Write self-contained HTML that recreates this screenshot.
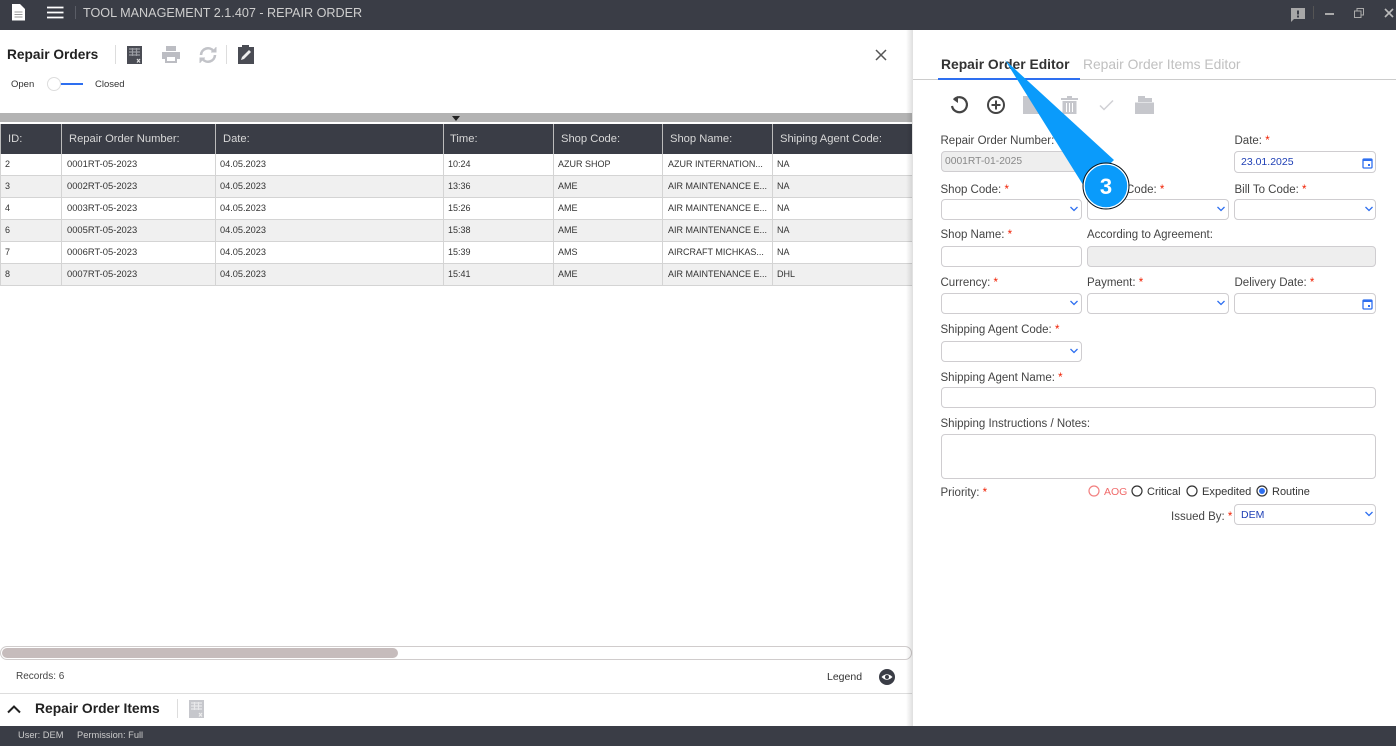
<!DOCTYPE html>
<html><head><meta charset="utf-8"><style>
html,body{margin:0;padding:0;width:1396px;height:746px;overflow:hidden;background:#fff}
body{font-family:"Liberation Sans",sans-serif;position:relative;color:#333}
div,span,svg{position:absolute;box-sizing:border-box}
.t{white-space:nowrap;line-height:14px}
.lb{font-size:11.5px;color:#444;white-space:nowrap;line-height:14px}
.lb b{color:#f01e00;font-weight:400;position:static}
.f{border:1px solid #cfcdd0;border-radius:4px;background:#fff;height:21px}
.hd{top:124px;height:30px;background:#3a3d46;color:#d8d8d8;font-size:11.2px;line-height:30px;padding-left:7px;border-left:1px solid #bbb;white-space:nowrap}
.r{left:0;width:912px;height:22px;border-bottom:1px solid #d4d4d4}
.c{font-size:9px;color:#333;line-height:21px;top:0;white-space:nowrap}
.n{font-size:9.400px;line-height:20px}
.d{font-size:9.200px}
.v{position:absolute;top:0;width:1px;height:22px;background:#d4d4d4}
</style></head><body>
<div style="left:0;top:0;width:1396px;height:30px;background:#3a3d46"></div>
<svg style="left:11px;top:4px" width="15" height="17" viewBox="0 0 15 17"><path d="M1 0H9L14 5V16.500H1Z" fill="#fff"/><path d="M3.500 8H11.500M3.500 10.500H11.500M3.500 13H11.500" stroke="#999" stroke-width="1"/></svg>
<svg style="left:47px;top:6px" width="17" height="13" viewBox="0 0 17 13"><path d="M0 1.500H16.500M0 6.500H16.500M0 11.500H16.500" stroke="#fff" stroke-width="1.700"/></svg>
<div style="left:75px;top:6px;width:1px;height:13px;background:#5a5d66"></div>
<div class="t" style="left:83px;top:6px;font-size:12.620px;color:#cfcfcf">TOOL MANAGEMENT 2.1.407 - REPAIR ORDER</div>
<svg style="left:1290px;top:8px" width="16" height="14" viewBox="0 0 16 14"><path d="M1 0H15V11H4L1 14Z" fill="#a8a8a8"/><rect x="7" y="2.500" width="2" height="4" fill="#3a3d46"/><rect x="7" y="7.500" width="2" height="2" fill="#3a3d46"/></svg>
<div style="left:1313px;top:6px;width:1px;height:13px;background:#555"></div>
<div style="left:1325px;top:13px;width:9px;height:2px;background:#aaa"></div>
<svg style="left:1354px;top:8px" width="10" height="10" viewBox="0 0 10 10" fill="none" stroke="#aaa"><rect x="0.500" y="3" width="6.500" height="6.500"/><path d="M3 3V0.500H9.500V7H7"/></svg>
<svg style="left:1384px;top:8px" width="10" height="10" viewBox="0 0 10 10"><path d="M1 1L9 9M9 1L1 9" stroke="#bbb" stroke-width="1.600"/></svg>

<div class="t" style="left:7px;top:48px;font-size:13.700px;font-weight:700;color:#222">Repair Orders</div>
<div style="left:115px;top:45px;width:1px;height:19px;background:#ddd"></div>
<svg style="left:127px;top:46px" width="15" height="18" viewBox="0 0 15 18"><rect width="15" height="18" fill="#4a4c54"/><path d="M2 3H13M2 6H13M2 9H13M5.500 2V10M9.500 2V10" stroke="#9a9ca2" stroke-width="1.200"/><path d="M10 13L13 16.500M13 13L10 16.500" stroke="#ddd" stroke-width="1.200"/></svg>
<svg style="left:162px;top:46px" width="18" height="17" viewBox="0 0 18 17"><path d="M4 0H14V5H4ZM0 6H18V13H15V17H3V13H0Z" fill="#bcbdc3"/><rect x="5" y="11" width="8" height="4" fill="#fff"/></svg>
<svg style="left:198px;top:45px" width="20" height="20" viewBox="0 0 20 20" fill="none" stroke="#c2c3c8" stroke-width="2.600"><path d="M3 10A7 7 0 0 1 15.500 6M17 10A7 7 0 0 1 4.500 14"/><path d="M13 7H18V2M7 13H2V18" stroke-width="1" fill="#c2c3c8"/></svg>
<div style="left:226px;top:45px;width:1px;height:19px;background:#ddd"></div>
<svg style="left:238px;top:45px" width="16" height="19" viewBox="0 0 16 19"><path d="M0 2H4V0H11V2H16V19H0Z" fill="#4a4c54"/><path d="M3 15L4 12L11 5L13 7L6 14Z" fill="#eee"/></svg>
<div class="t" style="left:11px;top:78px;font-size:9.500px">Open</div>
<div style="left:56px;top:83px;width:27px;height:2px;background:#2e6ff0"></div>
<div style="left:47px;top:77px;width:14px;height:14px;border-radius:50%;background:#fff;border:1px solid #ddd"></div>
<div class="t" style="left:95px;top:78px;font-size:9.500px">Closed</div>
<svg style="left:875px;top:49px" width="12" height="12" viewBox="0 0 12 12"><path d="M1 1L11 11M11 1L1 11" stroke="#555" stroke-width="1.500"/></svg>

<div style="left:0;top:113px;width:912px;height:9px;background:#b3b3b3"></div>
<div style="left:452px;top:116px;width:0;height:0;border:4.500px solid transparent;border-top:5px solid #222;border-bottom:0"></div>
<div class="hd" style="left:0;width:61px">ID:</div>
<div class="hd" style="left:61px;width:154px">Repair Order Number:</div>
<div class="hd" style="left:215px;width:228px">Date:</div>
<div class="hd" style="left:443px;width:110px;padding-left:6px">Time:</div>
<div class="hd" style="left:553px;width:109px">Shop Code:</div>
<div class="hd" style="left:662px;width:110px">Shop Name:</div>
<div class="hd" style="left:772px;width:140px">Shiping Agent Code:</div>

<div class="r" style="top:154px;background:#fff"><span class="c" style="left:5px">2</span><span class="c n" style="left:67px">0001RT-05-2023</span><span class="c d" style="left:220px">04.05.2023</span><span class="c" style="left:448px">10:24</span><span class="c" style="left:558px">AZUR SHOP</span><span class="c" style="left:668px">AZUR INTERNATION...</span><span class="c" style="left:777px">NA</span><i class="v" style="left:0"></i><i class="v" style="left:61px"></i><i class="v" style="left:215px"></i><i class="v" style="left:443px"></i><i class="v" style="left:553px"></i><i class="v" style="left:662px"></i><i class="v" style="left:772px"></i></div>
<div class="r" style="top:176px;background:#f0f0f0"><span class="c" style="left:5px">3</span><span class="c n" style="left:67px">0002RT-05-2023</span><span class="c d" style="left:220px">04.05.2023</span><span class="c" style="left:448px">13:36</span><span class="c" style="left:558px">AME</span><span class="c" style="left:668px">AIR MAINTENANCE E...</span><span class="c" style="left:777px">NA</span><i class="v" style="left:0"></i><i class="v" style="left:61px"></i><i class="v" style="left:215px"></i><i class="v" style="left:443px"></i><i class="v" style="left:553px"></i><i class="v" style="left:662px"></i><i class="v" style="left:772px"></i></div>
<div class="r" style="top:198px;background:#fff"><span class="c" style="left:5px">4</span><span class="c n" style="left:67px">0003RT-05-2023</span><span class="c d" style="left:220px">04.05.2023</span><span class="c" style="left:448px">15:26</span><span class="c" style="left:558px">AME</span><span class="c" style="left:668px">AIR MAINTENANCE E...</span><span class="c" style="left:777px">NA</span><i class="v" style="left:0"></i><i class="v" style="left:61px"></i><i class="v" style="left:215px"></i><i class="v" style="left:443px"></i><i class="v" style="left:553px"></i><i class="v" style="left:662px"></i><i class="v" style="left:772px"></i></div>
<div class="r" style="top:220px;background:#f0f0f0"><span class="c" style="left:5px">6</span><span class="c n" style="left:67px">0005RT-05-2023</span><span class="c d" style="left:220px">04.05.2023</span><span class="c" style="left:448px">15:38</span><span class="c" style="left:558px">AME</span><span class="c" style="left:668px">AIR MAINTENANCE E...</span><span class="c" style="left:777px">NA</span><i class="v" style="left:0"></i><i class="v" style="left:61px"></i><i class="v" style="left:215px"></i><i class="v" style="left:443px"></i><i class="v" style="left:553px"></i><i class="v" style="left:662px"></i><i class="v" style="left:772px"></i></div>
<div class="r" style="top:242px;background:#fff"><span class="c" style="left:5px">7</span><span class="c n" style="left:67px">0006RT-05-2023</span><span class="c d" style="left:220px">04.05.2023</span><span class="c" style="left:448px">15:39</span><span class="c" style="left:558px">AMS</span><span class="c" style="left:668px">AIRCRAFT MICHKAS...</span><span class="c" style="left:777px">NA</span><i class="v" style="left:0"></i><i class="v" style="left:61px"></i><i class="v" style="left:215px"></i><i class="v" style="left:443px"></i><i class="v" style="left:553px"></i><i class="v" style="left:662px"></i><i class="v" style="left:772px"></i></div>
<div class="r" style="top:264px;background:#f0f0f0"><span class="c" style="left:5px">8</span><span class="c n" style="left:67px">0007RT-05-2023</span><span class="c d" style="left:220px">04.05.2023</span><span class="c" style="left:448px">15:41</span><span class="c" style="left:558px">AME</span><span class="c" style="left:668px">AIR MAINTENANCE E...</span><span class="c" style="left:777px">DHL</span><i class="v" style="left:0"></i><i class="v" style="left:61px"></i><i class="v" style="left:215px"></i><i class="v" style="left:443px"></i><i class="v" style="left:553px"></i><i class="v" style="left:662px"></i><i class="v" style="left:772px"></i></div>

<div style="left:0;top:646px;width:912px;height:14px;border:1px solid #d0cccc;border-radius:7px;background:#fff"></div>
<div style="left:2px;top:648px;width:396px;height:10px;border-radius:5px;background:#c6bcbc"></div>
<div class="t" style="left:16px;top:670px;font-size:10px;color:#444">Records: 6</div>
<div class="t" style="left:827px;top:670px;font-size:10.500px;color:#333">Legend</div>
<svg style="left:879px;top:669px" width="16" height="16" viewBox="0 0 16 16"><circle cx="8" cy="8" r="8" fill="#3a3d46"/><path d="M2.500 8Q8 2.500 13.500 8Q8 13.500 2.500 8Z" fill="#fff"/><circle cx="8" cy="8" r="2" fill="#3a3d46"/></svg>
<div style="left:0;top:693px;width:912px;height:1px;background:#ddd"></div>
<svg style="left:7px;top:704px" width="14" height="10" viewBox="0 0 14 10"><path d="M1 8.500L7 2.500L13 8.500" fill="none" stroke="#222" stroke-width="2"/></svg>
<div class="t" style="left:35px;top:701px;font-size:13.850px;font-weight:700;color:#222">Repair Order Items</div>
<div style="left:177px;top:699px;width:1px;height:19px;background:#ddd"></div>
<svg style="left:189px;top:700px" width="15" height="18" viewBox="0 0 15 18"><rect width="15" height="18" fill="#c6c7cc"/><path d="M2 3H13M2 6H13M2 9H13M5.500 2V10M9.500 2V10" stroke="#e8e8ea" stroke-width="1.200"/><path d="M10 13L13 16.500M13 13L10 16.500" stroke="#eee" stroke-width="1.200"/></svg>

<div style="left:0;top:726px;width:1396px;height:20px;background:#3a3d46"></div>
<div class="t" style="left:18px;top:728px;font-size:9.300px;color:#ccc">User: DEM</div>
<div class="t" style="left:77px;top:728px;font-size:9.300px;color:#ccc">Permission: Full</div>

<div style="left:906px;top:30px;width:7px;height:696px;background:linear-gradient(to right,rgba(0,0,0,0),rgba(0,0,0,.13))"></div>

<div style="left:913px;top:79px;width:483px;height:1px;background:#ccc"></div>
<div class="t" style="left:941px;top:57px;font-size:13.850px;font-weight:700;color:#333">Repair Order Editor</div>
<div class="t" style="left:1083px;top:57px;font-size:13.830px;color:#c0c0c0">Repair Order Items Editor</div>
<div style="left:938px;top:78px;width:142px;height:2px;background:#2e6ff0"></div>

<svg style="left:949px;top:95px" width="20" height="20" viewBox="0 0 20 20" fill="none"><path d="M5 4.500A7.500 7.500 0 1 1 3 11" stroke="#444" stroke-width="2.200"/><path d="M9 1L4 4.500L9 8Z" fill="#444"/></svg>
<svg style="left:986px;top:95px" width="20" height="20" viewBox="0 0 20 20" fill="none" stroke="#444" stroke-width="2"><circle cx="10" cy="10" r="8"/><path d="M10 5.500V14.500M5.500 10H14.500"/></svg>
<svg style="left:1023px;top:96px" width="18" height="18" viewBox="0 0 18 18"><path d="M0 0H14L18 4V18H0Z" fill="#c6c7cc"/></svg>
<svg style="left:1061px;top:95px" width="17" height="19" viewBox="0 0 17 19"><path d="M0 3H6V1H11V3H17V5H0ZM1.500 6H15.500V19H1.500Z" fill="#c6c7cc"/><path d="M5.500 8V17M8.500 8V17M11.500 8V17" stroke="#fff"/></svg>
<svg style="left:1099px;top:99px" width="15" height="12" viewBox="0 0 15 12"><path d="M1 6.500L5 10.500L14 1.500" fill="none" stroke="#d0d0d4" stroke-width="1.500"/></svg>
<svg style="left:1135px;top:96px" width="19" height="18" viewBox="0 0 19 18"><path d="M3 0H10V2H17V6H3ZM0 6.500H19V18H0Z" fill="#c6c7cc"/></svg>

<div class="lb" style="left:940.500px;top:134px">Repair Order Number:</div>
<div class="f" style="left:941px;top:151px;width:141px;background:#eee"></div>
<div class="t" style="left:945px;top:155px;font-size:10.300px;color:#888">0001RT-01-2025</div>
<div class="lb" style="left:1234.500px;top:134px">Date: <b>*</b></div>
<div class="f" style="left:1234px;top:151px;width:141.500px;height:22px"></div>
<div class="t" style="left:1241px;top:155px;font-size:10.500px;color:#1e3fb5">23.01.2025</div>
<svg style="left:1362px;top:157px" width="11" height="12" viewBox="0 0 11 12"><rect x="1" y="2" width="9" height="9" rx="1" fill="none" stroke="#2e6ff0" stroke-width="1.300"/><rect x="1" y="2" width="9" height="2" fill="#2e6ff0"/><rect x="6" y="7" width="2" height="2" fill="#2e6ff0"/></svg>

<div class="lb" style="left:940.500px;top:183px">Shop Code: <b>*</b></div>
<div class="f" style="left:941px;top:199px;width:141px"></div>
<div class="lb" style="left:1126px;top:183px">Code: <b>*</b></div>
<div class="f" style="left:1087px;top:199px;width:142px"></div>
<div class="lb" style="left:1234.500px;top:183px">Bill To Code: <b>*</b></div>
<div class="f" style="left:1234px;top:199px;width:141.500px"></div>

<div class="lb" style="left:940.500px;top:228px">Shop Name: <b>*</b></div>
<div class="f" style="left:941px;top:246px;width:141px"></div>
<div class="lb" style="left:1087px;top:228px">According to Agreement:</div>
<div class="f" style="left:1087px;top:246px;width:288.500px;background:#eee"></div>

<div class="lb" style="left:940.500px;top:276px">Currency: <b>*</b></div>
<div class="f" style="left:941px;top:293px;width:141px"></div>
<div class="lb" style="left:1087px;top:276px">Payment: <b>*</b></div>
<div class="f" style="left:1087px;top:293px;width:142px"></div>
<div class="lb" style="left:1234.500px;top:276px">Delivery Date: <b>*</b></div>
<div class="f" style="left:1234px;top:293px;width:141.500px"></div>
<svg style="left:1362px;top:298px" width="11" height="12" viewBox="0 0 11 12"><rect x="1" y="2" width="9" height="9" rx="1" fill="none" stroke="#2e6ff0" stroke-width="1.300"/><rect x="1" y="2" width="9" height="2" fill="#2e6ff0"/><rect x="6" y="7" width="2" height="2" fill="#2e6ff0"/></svg>

<div class="lb" style="left:940.500px;top:323px">Shipping Agent Code: <b>*</b></div>
<div class="f" style="left:941px;top:341px;width:141px"></div>
<div class="lb" style="left:940.500px;top:371px">Shipping Agent Name: <b>*</b></div>
<div class="f" style="left:941px;top:387px;width:434.500px"></div>
<div class="lb" style="left:940.500px;top:417px">Shipping Instructions / Notes:</div>
<div class="f" style="left:941px;top:434px;width:434.500px;height:45px"></div>

<svg style="left:1070px;top:206px" width="8" height="6" viewBox="0 0 8 6"><path d="M0.500 1L4 4.500L7.500 1" fill="none" stroke="#2e6ff0" stroke-width="1.300"/></svg>
<svg style="left:1217px;top:206px" width="8" height="6" viewBox="0 0 8 6"><path d="M0.500 1L4 4.500L7.500 1" fill="none" stroke="#2e6ff0" stroke-width="1.300"/></svg>
<svg style="left:1365px;top:206px" width="8" height="6" viewBox="0 0 8 6"><path d="M0.500 1L4 4.500L7.500 1" fill="none" stroke="#2e6ff0" stroke-width="1.300"/></svg>
<svg style="left:1070px;top:300px" width="8" height="6" viewBox="0 0 8 6"><path d="M0.500 1L4 4.500L7.500 1" fill="none" stroke="#2e6ff0" stroke-width="1.300"/></svg>
<svg style="left:1217px;top:300px" width="8" height="6" viewBox="0 0 8 6"><path d="M0.500 1L4 4.500L7.500 1" fill="none" stroke="#2e6ff0" stroke-width="1.300"/></svg>
<svg style="left:1070px;top:348px" width="8" height="6" viewBox="0 0 8 6"><path d="M0.500 1L4 4.500L7.500 1" fill="none" stroke="#2e6ff0" stroke-width="1.300"/></svg>

<div class="lb" style="left:940.500px;top:486px">Priority: <b>*</b></div>
<svg style="left:1088px;top:485px" width="12" height="12" viewBox="0 0 12 12"><circle cx="6" cy="6" r="5" fill="none" stroke="#f28080" stroke-width="1.200"/></svg>
<div class="t" style="left:1104px;top:485px;font-size:10.500px;color:#f06a6a">AOG</div>
<svg style="left:1131px;top:485px" width="12" height="12" viewBox="0 0 12 12"><circle cx="6" cy="6" r="5" fill="none" stroke="#333" stroke-width="1.200"/></svg>
<div class="t" style="left:1147px;top:485px;font-size:11px;color:#333">Critical</div>
<svg style="left:1186px;top:485px" width="12" height="12" viewBox="0 0 12 12"><circle cx="6" cy="6" r="5" fill="none" stroke="#333" stroke-width="1.200"/></svg>
<div class="t" style="left:1202px;top:485px;font-size:11.100px;color:#333">Expedited</div>
<svg style="left:1256px;top:485px" width="12" height="12" viewBox="0 0 12 12"><circle cx="6" cy="6" r="5" fill="none" stroke="#333" stroke-width="1.200"/><circle cx="6" cy="6" r="3" fill="#2e6ff0"/></svg>
<div class="t" style="left:1272px;top:485px;font-size:11px;color:#333">Routine</div>
<div class="lb" style="left:1171px;top:510px">Issued By: <b>*</b></div>
<div class="f" style="left:1234px;top:504px;width:141.500px"></div>
<div class="t" style="left:1241px;top:508px;font-size:10.500px;color:#1e3fb5">DEM</div>
<svg style="left:1365px;top:511px" width="8" height="6" viewBox="0 0 8 6"><path d="M0.500 1L4 4.500L7.500 1" fill="none" stroke="#2e6ff0" stroke-width="1.300"/></svg>

<svg style="left:1000px;top:55px" width="140" height="160" viewBox="1000 55 140 160"><path d="M1005 60L1114 160L1085 188Z" fill="#0a9bfb"/><circle cx="1106" cy="186" r="23" fill="#0a9bfb" stroke="#111" stroke-width="1"/><circle cx="1106" cy="186" r="21.800" fill="none" stroke="#fff" stroke-width="1.200"/><text x="1106" y="194" text-anchor="middle" font-family="Liberation Sans" font-size="22" font-weight="700" fill="#fff">3</text></svg>
</body></html>
